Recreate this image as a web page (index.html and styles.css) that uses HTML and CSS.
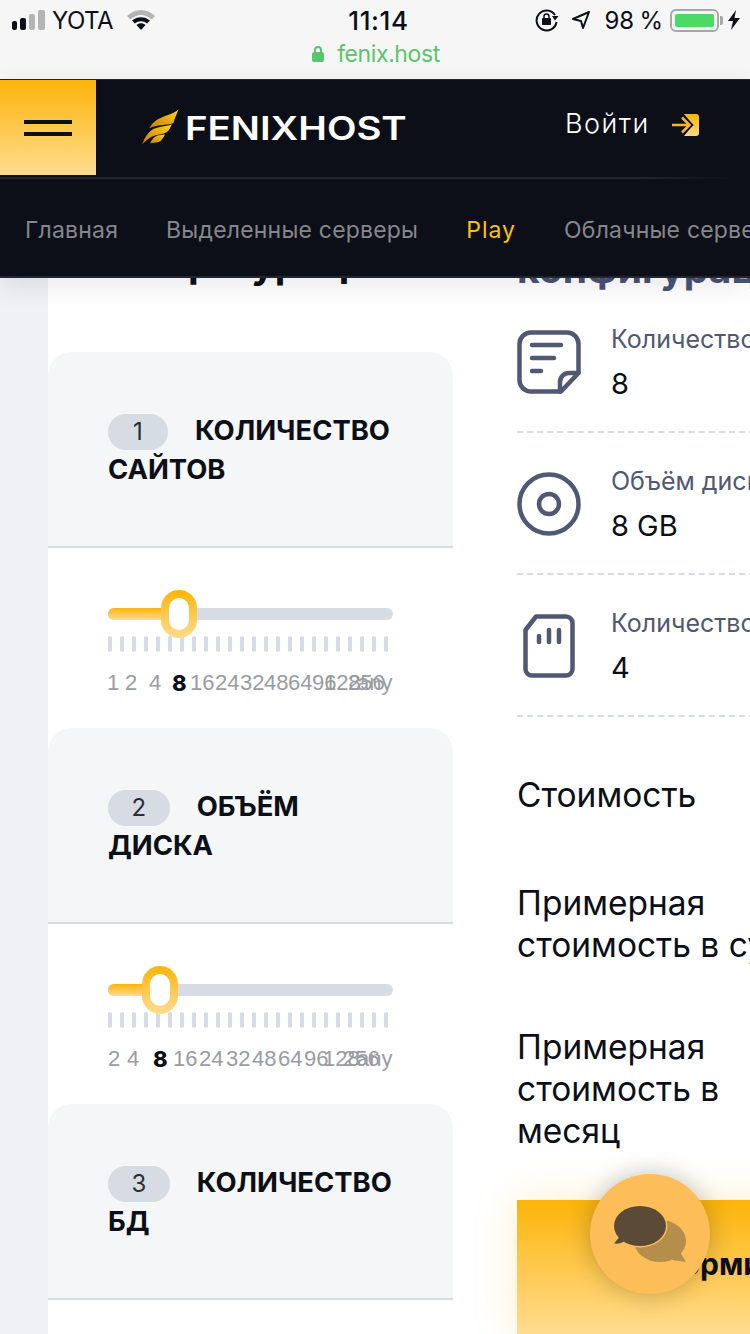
FILE: index.html
```html
<!DOCTYPE html>
<html lang="ru">
<head>
  <meta charset="UTF-8">
  <meta name="viewport" content="width=device-width, initial-scale=1">
  <title>FenixHost</title>
  <link rel="stylesheet" href="styles.css">
</head>
<body>

  <div class="phone-top">
    <div class="status-bar">
      <div class="status-left">
        <svg width="33" height="20" viewBox="0 0 33 20">
          <rect x="0" y="11" width="5" height="9" rx="2" fill="#0c0f17"/>
          <rect x="8" y="8" width="6" height="12" rx="2" fill="#0c0f17"/>
          <rect x="17" y="4" width="6" height="16" rx="2" fill="#b4b4b4"/>
          <rect x="26" y="0" width="7" height="20" rx="2" fill="#b4b4b4"/>
        </svg>
        <span>YOTA</span>
        <svg class="wifi" width="28" height="20" viewBox="0 0 28 20">
          <path d="M0 6C8 -2 20 -2 28 6L24.500 9.500C18 3.500 10 3.500 3.500 9.500Z" fill="#b4b4b4"/>
          <path d="M5 10.500C10 6 18 6 23 10.500L20 13.500C16.500 10.500 11.500 10.500 8 13.500Z" fill="#0c0f17"/>
          <path d="M9.500 15C12 12.800 16 12.800 18.500 15L14 20Z" fill="#0c0f17"/>
        </svg>
      </div>
      <div class="status-time">11:14</div>
      <div class="status-right">
        <svg class="rotate-lock" width="24" height="24" viewBox="0 0 24 24">
          <path d="M20 7A10 10 0 1 0 21.500 14" fill="none" stroke="#0c0f17" stroke-width="2"/>
          <path d="M17 8L23.500 8L20 12.500Z" fill="#0c0f17"/>
          <rect x="7" y="10" width="9" height="7" rx="1" fill="#0c0f17"/>
          <path d="M9 10V8.500A2.500 2.500 0 0 1 14 8.500V10" fill="none" stroke="#0c0f17" stroke-width="1.500"/>
        </svg>
        <svg class="locate" width="20" height="20" viewBox="0 0 20 20">
          <path d="M18 2L2 9L10 11L12 18Z" fill="none" stroke="#0c0f17" stroke-width="2" stroke-linejoin="round"/>
        </svg>
        <span class="percent">98 %</span>
        <div class="battery"><div class="battery-level"></div></div>
        <svg class="bolt" width="12" height="20" viewBox="0 0 12 20">
          <path d="M8 0L0 11H5L3 20L12 8H6.500Z" fill="#0c0f17"/>
        </svg>
      </div>
    </div>
    <div class="url-bar">
      <svg width="12" height="16" viewBox="0 0 12 16">
        <rect x="0" y="6" width="12" height="10" rx="2" fill="#5ac46e"/>
        <path d="M3 7V4A3 3 0 0 1 9 4V7" fill="none" stroke="#5ac46e" stroke-width="2"/>
      </svg>
      <span>fenix.host</span>
    </div>
  </div>

  <header class="site-header">
    <div class="top-row">
      <button class="burger"><span></span><span></span></button>
      <div class="logo">
        <svg width="38" height="36" viewBox="0 0 38 36">
          <defs>
            <linearGradient id="wing" x1="0" y1="1" x2="1" y2="0">
              <stop offset="0" stop-color="#c97c00"/>
              <stop offset="1" stop-color="#ffd21f"/>
            </linearGradient>
          </defs>
          <path d="M36.700 0.300C30 6 22 6.500 14.700 11C11 13.500 9 16 7.300 19.300C15 15.500 24 16.500 31.300 14.300C33 9 35 4 36.700 0.300Z" fill="url(#wing)"/>
          <path d="M29.700 15.300C23 18 15.500 17.500 9.700 21C5 24.500 2 30 0.300 35.300C3.500 32 6 29.500 9.700 27.700C15 25.300 20 26 24.700 23.300C27 21.500 28.700 18.500 29.700 15.300Z" fill="url(#wing)"/>
          <path d="M23 25.300C20 26.500 17 25.800 14.700 26.700C12 28 9.500 31 8 34.300C12 34 16 33.500 18.700 32C20.500 30 22 27.500 23 25.300Z" fill="url(#wing)"/>
        </svg>
        <span class="logo-text">FENIXHOST</span>
      </div>
      <a class="login">
        <span>Войти</span>
        <svg width="28" height="22" viewBox="0 0 28 22">
          <defs>
            <linearGradient id="loginFill" x1="0" y1="0" x2="0" y2="1">
              <stop offset="0" stop-color="#fbb40a"/>
              <stop offset="1" stop-color="#ffd885"/>
            </linearGradient>
          </defs>
          <path d="M13 0H25A3 3 0 0 1 28 3V19A3 3 0 0 1 25 22H13L22 11Z" fill="url(#loginFill)"/>
          <path d="M10 2.500L18.500 11L10 19.500" fill="none" stroke="#0c0f17" stroke-width="6"/>
          <path d="M1 11H18M11 3.500L18.500 11L11 18.500" fill="none" stroke="#fbb52a" stroke-width="2.500"/>
        </svg>
      </a>
    </div>
    <nav class="main-nav">
      <a>Главная</a>
      <a>Выделенные серверы</a>
      <a class="active">Play</a>
      <a>Облачные серверы</a>
    </nav>
  </header>

  <main class="page">
    <div class="left-col">
      <h2 class="left-title">конфигурацию</h2>

      <section class="option">
        <h3 class="option-head"><span class="num">1</span>Количество сайтов</h3>
        <div class="option-body">
          <div class="slider">
            <div class="slider-fill" style="width:72px"></div>
            <div class="slider-thumb" style="left:53px"></div>
          </div>
          <div class="ticks" id="ticks1"></div>
          <div class="scale">
            <span style="left:-1px">1</span><span style="left:17px">2</span><span style="left:41px">4</span><b style="left:64px">8</b><span style="left:82px">16</span><span style="left:107px">24</span><span style="left:132px">32</span><span style="left:156px">48</span><span style="left:180px">64</span><span style="left:204px">96</span><span style="left:216px">128</span><span style="left:240px">256</span><span style="left:249px">any</span>
          </div>
        </div>
      </section>

      <section class="option">
        <h3 class="option-head"><span class="num">2</span>Объём диска</h3>
        <div class="option-body">
          <div class="slider">
            <div class="slider-fill" style="width:52px"></div>
            <div class="slider-thumb" style="left:34px"></div>
          </div>
          <div class="ticks" id="ticks2"></div>
          <div class="scale">
            <span style="left:0">2</span><span style="left:19px">4</span><b style="left:45px">8</b><span style="left:65px">16</span><span style="left:91px">24</span><span style="left:118px">32</span><span style="left:144px">48</span><span style="left:170px">64</span><span style="left:196px">96</span><span style="left:215px">128</span><span style="left:235px">256</span><span style="left:249px">any</span>
          </div>
        </div>
      </section>

      <section class="option">
        <h3 class="option-head"><span class="num">3</span>Количество БД</h3>
      </section>
    </div>

    <div class="right-col">
      <h2 class="right-title">конфигурация</h2>

      <div class="spec">
        <svg class="spec-icon" width="64" height="64" viewBox="0 0 64 64" fill="none" stroke="#505872" stroke-width="4.500" stroke-linecap="round" stroke-linejoin="round">
          <path d="M14 2.500H50A11.500 11.500 0 0 1 61.500 14V43L44 61.500H14A11.500 11.500 0 0 1 2.500 50V14A11.500 11.500 0 0 1 14 2.500Z"/>
          <path d="M43 61.500V52A9 9 0 0 1 52 43H61.500"/>
          <path d="M15 15H44M15 28H37M15 41H24"/>
        </svg>
        <div class="spec-text">
          <div class="spec-label">Количество сайтов</div>
          <div class="spec-value">8</div>
        </div>
      </div>

      <div class="spec">
        <svg class="spec-icon" width="64" height="64" viewBox="0 0 64 64" fill="none" stroke="#505872" stroke-width="4.500">
          <circle cx="32" cy="32" r="29.500"/>
          <circle cx="32" cy="32" r="10"/>
        </svg>
        <div class="spec-text">
          <div class="spec-label">Объём диска</div>
          <div class="spec-value">8 GB</div>
        </div>
      </div>

      <div class="spec">
        <svg class="spec-icon" width="64" height="64" viewBox="0 0 64 64" fill="none" stroke="#505872" stroke-width="4.500" stroke-linecap="round" stroke-linejoin="round">
          <path d="M19 2.500H49A6.500 6.500 0 0 1 55.500 9V55A6.500 6.500 0 0 1 49 61.500H15A6.500 6.500 0 0 1 8.500 55V16Z"/>
          <path d="M22 22V28M32 16V28M42 16V28"/>
        </svg>
        <div class="spec-text">
          <div class="spec-label">Количество БД</div>
          <div class="spec-value">4</div>
        </div>
      </div>

      <div class="price price-first">Стоимость</div>
      <div class="price">Примерная стоимость в сутки</div>
      <div class="price">Примерная стоимость в месяц</div>

      <button class="order">Оформить</button>
    </div>
  </main>

  <div class="chat">
    <svg width="72" height="56" viewBox="0 0 72 56">
      <path d="M72 56L66 46L58 54Z" fill="#b48e4a"/>
      <ellipse cx="46" cy="35" rx="26" ry="21" fill="#b48e4a"/>
      <ellipse cx="26" cy="20" rx="27.500" ry="21.500" fill="#fdbd58"/>
      <ellipse cx="26" cy="20" rx="26" ry="20" fill="#5b4b36"/>
      <path d="M5.300 31L0 37.500C4 38 8 37 11 35Z" fill="#5b4b36"/>
    </svg>
  </div>

  <script>
    ['ticks1', 'ticks2'].forEach(function (id) {
      var box = document.getElementById(id);
      for (var i = 0; i < 24; i++) {
        box.appendChild(document.createElement('i'));
      }
    });
  </script>

</body>
</html>
```

FILE: styles.css
```css
* {
  box-sizing: border-box;
}

html, body {
  margin: 0;
  padding: 0;
  height: 1334px;
  overflow: hidden;
}

body {
  position: relative;
  font-family: 'Inter', 'Noto Sans', sans-serif;
  background: #fff;
  color: #0c0f17;
}

.phone-top {
  height: 79px;
  background: #f6f6f7;
  padding: 0 10px 0 12px;
}

.status-bar {
  height: 40px;
  display: flex;
  align-items: center;
  justify-content: space-between;
  font-size: 24px;
}

.status-left {
  width: 270px;
  display: flex;
  align-items: center;
  gap: 7px;
  letter-spacing: -0.5px;
}

.status-left .wifi {
  margin-left: 7px;
}

.status-time {
  font-weight: 500;
  font-size: 26px;
  letter-spacing: 0.6px;
  margin-left: 5px;
}

.status-right {
  width: 270px;
  display: flex;
  align-items: center;
  justify-content: flex-end;
}

.status-right .locate {
  margin-left: 12px;
}

.percent {
  margin-left: 13px;
  word-spacing: -1.500px;
}

.battery {
  position: relative;
  width: 49px;
  height: 23px;
  padding: 3px;
  margin-left: 7px;
  border: 2px solid #a8a8a8;
  border-radius: 6px;
}

.battery::after {
  content: '';
  position: absolute;
  right: -6px;
  top: 5px;
  width: 3px;
  height: 9px;
  border-radius: 0 2px 2px 0;
  background: #a8a8a8;
}

.battery-level {
  height: 100%;
  background: #4cd964;
  border-radius: 2px;
}

.bolt {
  margin-left: 9px;
}

.url-bar {
  display: flex;
  justify-content: center;
  align-items: center;
  gap: 13px;
  height: 28px;
  font-size: 23px;
  letter-spacing: -0.4px;
  color: #5ac46e;
}

.site-header {
  position: relative;
  z-index: 5;
  height: 199px;
  background: #0c0f17;
  border-top: 1px solid #23262e;
  border-bottom: 2px solid #23262e;
  box-shadow: 0 8px 26px rgba(12, 15, 23, 0.09);
}

.top-row {
  height: 99px;
  display: flex;
  align-items: center;
  border-bottom: 2px solid;
  border-image: linear-gradient(90deg, #23262e 85%, #0c0f17 98%) 1;
}

.burger {
  align-self: flex-start;
  width: 96px;
  height: 95px;
  padding: 0;
  border: none;
  background: linear-gradient(180deg, #fbb40a 0%, #ffdc90 100%);
  display: flex;
  flex-direction: column;
  align-items: center;
  justify-content: center;
  gap: 8px;
}

.burger span {
  width: 48px;
  height: 4px;
  background: #0c0f17;
}

.logo {
  display: flex;
  align-items: center;
  margin-left: 46px;
  gap: 5px;
}

.logo svg {
  margin-top: -3px;
}

.logo-text {
  color: #fff;
  font-weight: 600;
  font-size: 32px;
  transform: scaleX(1.2);
  transform-origin: left;
  width: 220px;
}

.login {
  display: flex;
  align-items: center;
  gap: 21px;
  color: #fff;
  font-size: 27px;
  font-weight: 300;
  letter-spacing: 1.500px;
  margin-left: 160px;
  margin-top: -7px;
}

.login span {
  margin-top: -4px;
}

.main-nav {
  height: 98px;
  display: flex;
  align-items: center;
  gap: 48px;
  padding: 3px 0 0 25px;
  white-space: nowrap;
  overflow: hidden;
  font-size: 23px;
  letter-spacing: 0.2px;
  color: #85878c;
}

.main-nav .active {
  color: #fbc400;
  letter-spacing: 1px;
}

.page {
  display: flex;
  align-items: flex-start;
  background: #fff;
  height: 1056px;
  border-left: 48px solid #f0f1f6;
  overflow: hidden;
}

.left-col {
  width: 405px;
  flex-shrink: 0;
}

.left-title,
.right-title {
  font-size: 39px;
  line-height: 46px;
  font-weight: 700;
  white-space: nowrap;
}

.left-title {
  margin: -37px 0 0;
  height: 111px;
  padding-left: 60px;
  color: #0c0f17;
}

.right-title {
  margin: -32px 0 -1px;
  height: 46px;
  color: #4a5274;
}

.option-head {
  margin: 0;
  height: 196px;
  padding: 59px 50px 0 60px;
  background: #f5f6f8;
  border-bottom: 2px solid #d7dbe4;
  border-radius: 24px 24px 0 0;
  font-size: 27.4px;
  line-height: 38px;
  font-weight: 700;
  text-transform: uppercase;
}

.num {
  display: inline-block;
  min-width: 60px;
  height: 36px;
  padding: 0 23.500px;
  margin-right: 27px;
  border-radius: 18px;
  background: #d7dbe4;
  font-size: 24px;
  font-weight: 400;
  line-height: 36px;
  text-align: center;
  color: #2a2d36;
}

.option-body {
  height: 180px;
  padding: 60px 60px 0;
}

.slider {
  position: relative;
  height: 12px;
  border-radius: 6px;
  background: #d7dbe4;
}

.slider-fill {
  height: 12px;
  border-radius: 6px 0 0 6px;
  background: linear-gradient(180deg, #fbb40a 0%, #ffdc90 100%);
}

.slider-thumb {
  position: absolute;
  top: -18px;
  width: 36px;
  height: 48px;
  border-radius: 18px;
  background: linear-gradient(180deg, #fbb40a 0%, #ffdc90 100%);
}

.slider-thumb::after {
  content: '';
  position: absolute;
  top: 8px;
  right: 8px;
  bottom: 8px;
  left: 8px;
  border-radius: 10px;
  background: #fff;
}

.ticks {
  display: flex;
  gap: 8px;
  margin-top: 16px;
}

.ticks i {
  width: 4px;
  height: 16px;
  border-radius: 2px;
  background: #d7dbe4;
}

.scale {
  position: relative;
  height: 30px;
  margin-top: 16px;
  font-family: 'Liberation Sans', Arial, sans-serif;
  font-size: 22px;
  line-height: 30px;
  color: #9a9ca1;
}

.scale span,
.scale b {
  position: absolute;
  top: 0;
}

.scale b {
  font-family: 'Inter', sans-serif;
  color: #0c0f17;
  font-weight: 800;
}

.right-col {
  margin-left: 64px;
  width: 420px;
  flex-shrink: 0;
}

.spec {
  display: flex;
  align-items: flex-start;
  gap: 30px;
  height: 142px;
  border-bottom: 2px dashed #d7dbe4;
}

.spec-icon {
  margin-top: 39px;
  flex-shrink: 0;
}

.spec-text {
  padding-top: 33px;
}

.spec-label {
  font-size: 25px;
  line-height: 30px;
  color: #505872;
  white-space: nowrap;
}

.spec-value {
  font-size: 29px;
  line-height: 34px;
  margin-top: 13px;
}

.price {
  font-size: 33.500px;
  line-height: 42px;
  width: 305px;
  margin-top: 60px;
}

.price-first {
  margin-top: 57px;
  margin-bottom: 66px;
}

.price-first + .price {
  margin-top: 0;
}

.order {
  display: block;
  width: 396px;
  height: 134px;
  margin-top: 48px;
  padding: 0 0 6px;
  border: none;
  background: linear-gradient(180deg, #fbb40a 0%, #ffdc90 100%);
  font-family: inherit;
  font-size: 30px;
  font-weight: 700;
  color: #0c0f17;
  box-shadow: 0 0 40px rgba(251, 180, 10, 0.22);
}

.chat {
  position: absolute;
  left: 590px;
  top: 1174px;
  width: 120px;
  height: 120px;
  border-radius: 50%;
  background: #fdbd58;
  box-shadow: 0 0 24px rgba(12, 15, 23, 0.25);
  display: flex;
  align-items: center;
  justify-content: center;
  z-index: 10;
}
```
